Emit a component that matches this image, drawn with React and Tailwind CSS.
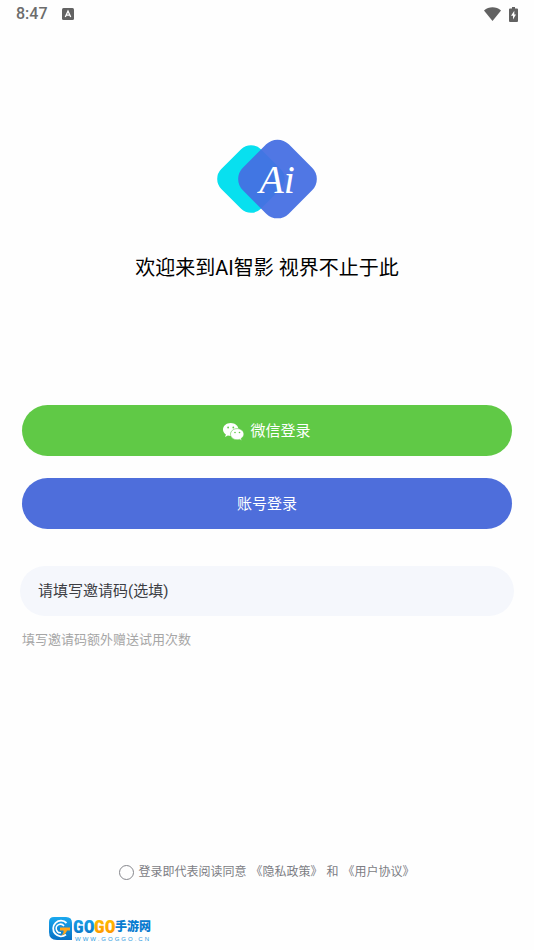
import { useState } from 'react'

const StatusBar = () => (
  <div className="flex h-7 items-center justify-between px-4 text-[#6c6c6c]">
    <div className="flex items-center gap-3.5">
      <span className="text-base font-medium leading-5">8:47</span>
      <svg width="12" height="12" viewBox="0 0 12 12" aria-hidden="true">
        <rect width="12" height="12" rx="1.500" fill="#626262" />
        <path d="M3.3 9 6 3l2.7 6M4.4 7.2h3.2" fill="none" stroke="#fff" strokeWidth="1.3" />
      </svg>
    </div>
    <div className="flex items-center gap-2 text-[#626262]">
      <svg width="17" height="14" viewBox="0 0 17 14" fill="currentColor" aria-hidden="true">
        <path d="M0 3.400C4.800-.9 12.200-.9 17 3.400L8.500 14z" />
      </svg>
      <svg width="9" height="15" viewBox="0 0 9 15" aria-hidden="true">
        <path d="M3 0h3v1.500h2q1 0 1 1V14q0 1-1 1H1q-1 0-1-1V2.500q0-1 1-1h2z" fill="currentColor" />
        <path d="M5.300 3.800 2 8.800h2v3.700l3-5H5.300z" fill="#fff" />
      </svg>
    </div>
  </div>
)

const Logo = () => (
  <svg width="104" height="84" viewBox="0 0 104 84" role="img" aria-label="Ai">
    <rect x="8" y="15" width="56" height="56" rx="14" fill="#08e0ef" transform="rotate(45 36 43)" />
    <rect x="30" y="10.500" width="65" height="65" rx="16" fill="#456fe2" fillOpacity="0.94" transform="rotate(45 62.500 43)" />
    <text
      x="62"
      y="57"
      fill="#fff"
      fontSize="40"
      fontStyle="italic"
      textAnchor="middle"
      fontFamily="'Liberation Serif', serif"
    >
      Ai
    </text>
  </svg>
)

const WechatIcon = () => (
  <svg width="21" height="18" viewBox="0 0 21 18" aria-hidden="true">
    <path
      d="M7.700 0C3.400 0 0 2.900 0 6.500c0 2.100 1.100 3.800 2.900 5.100l-.8 2.400 2.700-1.400c1 .3 1.900.4 2.900.4 4.300 0 7.800-2.900 7.800-6.500S12 0 7.700 0z"
      fill="#fff"
    />
    <path
      d="M14.200 5.600c-3.700 0-6.700 2.500-6.700 5.600s3 5.600 6.700 5.600c.8 0 1.600-.1 2.300-.4l2.200 1.200-.6-2c1.700-1.100 2.800-2.700 2.800-4.500 0-3-3-5.500-6.700-5.500z"
      fill="#fff"
      stroke="#60c946"
      strokeWidth="0.600"
    />
    <g fill="#60c946">
      <circle cx="5.100" cy="4.500" r="0.900" />
      <circle cx="10.300" cy="4.500" r="0.900" />
      <circle cx="12" cy="9.500" r="0.800" />
      <circle cx="16.500" cy="9.500" r="0.800" />
    </g>
  </svg>
)

const SiteMark = () => (
  <svg width="108" height="28" viewBox="0 0 108 28" role="img" aria-label="GOGO手游网" className="block">
    <defs>
      <linearGradient id="blue" x1="0" y1="0" x2="0" y2="1">
        <stop offset="0" stopColor="#1aa8ee" />
        <stop offset="1" stopColor="#0870c4" />
      </linearGradient>
      <linearGradient id="orange" x1="0" y1="0" x2="0" y2="1">
        <stop offset="0" stopColor="#ffc400" />
        <stop offset="1" stopColor="#ff9100" />
      </linearGradient>
    </defs>
    <path d="M6 1h12q6 0 6 6v17H9q-8 0-8-8V6q0-5 5-5z" fill="url(#blue)" />
    <path d="M18.500 7A7.800 7.800 0 1 0 18 18.500" fill="none" stroke="#fff" strokeWidth="1.800" />
    <path d="M16 10A4.300 4.300 0 1 0 13 16.800" fill="none" stroke="#fff" strokeWidth="1.500" />
    <path d="M12 11.500h10v3h-3q-1 4-6 5 3-2 2.500-5H12z" fill="#ffa61a" />
    <g fontWeight="900" fontFamily="'Roboto Condensed', 'Roboto', sans-serif" fontSize="18">
      <text x="25" y="17" fill="url(#blue)">GO</text>
      <text x="46" y="17" fill="url(#orange)">GO</text>
    </g>
    <text x="67" y="15" fill="#087bd0" fontSize="12" fontWeight="900" fontFamily="'Noto Sans CJK SC', sans-serif">
      手游网
    </text>
    <text x="27" y="25" fill="#2b9be0" fontSize="6" letterSpacing="2" fontFamily="'Liberation Sans', sans-serif">
      WWW.GOGGO.CN
    </text>
  </svg>
)

const App = () => {
  const [code, setCode] = useState('')
  const [agreed, setAgreed] = useState(false)

  return (
    <div className="flex min-h-screen flex-col bg-[#fefefe] font-['Roboto','Noto_Sans_CJK_SC',sans-serif]">
      <StatusBar />

      <main className="flex flex-1 flex-col pt-27">
        {/* Welcome */}
        <div className="flex flex-col items-center">
          <Logo />
          <h1 className="mt-8 text-xl leading-8 text-black">欢迎来到AI智影 视界不止于此</h1>
        </div>

        {/* Login */}
        <div className="mt-[121px] flex flex-col gap-5.5 px-5.5 text-[15px] text-white">
          <button type="button" className="flex h-[51px] items-center justify-center gap-1.5 rounded-full bg-[#60c946] pt-0.5">
            <WechatIcon />
            微信登录
          </button>
          <button type="button" className="h-[51px] rounded-full bg-[#4e6edb] pt-0.5">
            账号登录
          </button>
        </div>

        {/* Invite code */}
        <div className="mt-[37px] flex flex-col px-5">
          <input
            type="text"
            aria-label="邀请码"
            aria-describedby="invite-hint"
            placeholder="请填写邀请码(选填)"
            value={code}
            onChange={(e) => setCode(e.target.value)}
            className="h-[50px] w-full rounded-full bg-[#f5f7fc] px-4.5 text-[15px] text-[#3c3d43] outline-none placeholder:text-[#3c3d43]"
          />
          <p id="invite-hint" className="mt-3 px-0.5 text-[13px] leading-6 text-[#a6a6a6]">
            填写邀请码额外赠送试用次数
          </p>
        </div>
      </main>

      {/* Agreement */}
      <div className="flex items-center justify-center gap-1 text-xs leading-6 text-[#7c7d84]">
        <input
          id="agree"
          type="checkbox"
          checked={agreed}
          onChange={(e) => setAgreed(e.target.checked)}
          className="size-[15px] shrink-0 appearance-none rounded-full border border-[#85868c] checked:bg-[#4e6edb]"
        />
        <label htmlFor="agree">登录即代表阅读同意</label>
        <a href="#privacy">《隐私政策》</a>
        <span>和</span>
        <a href="#terms">《用户协议》</a>
      </div>

      <footer className="mt-8 px-12 pb-1.5">
        <SiteMark />
      </footer>
    </div>
  )
}

export default App
